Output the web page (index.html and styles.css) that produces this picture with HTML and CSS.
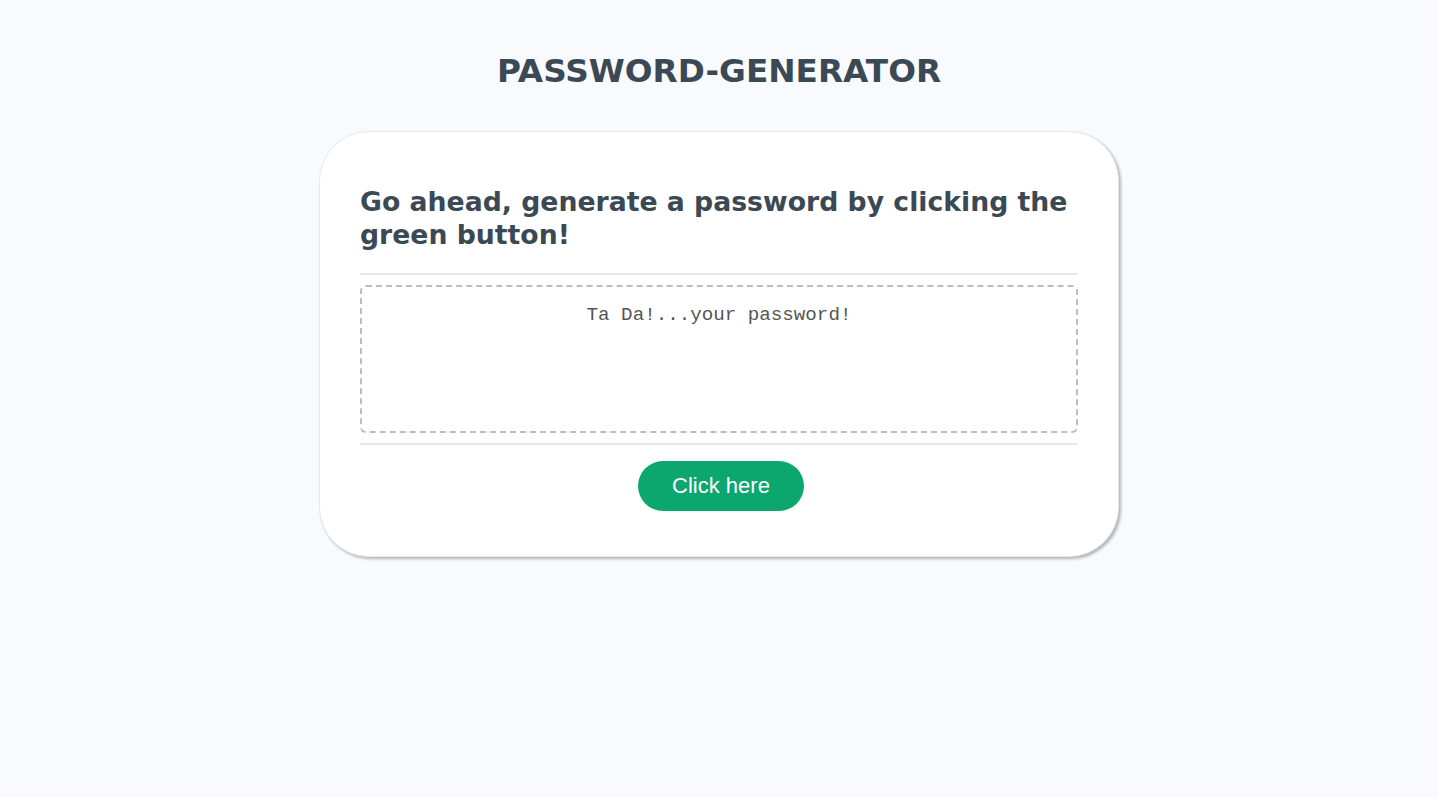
FILE: index.html
```html
<!DOCTYPE html>
<html lang="en">
<head>
<meta charset="UTF-8">
<title>Password Generator</title>
<link rel="stylesheet" href="styles.css">
</head>
<body>
<div class="wrapper">
  <header class="page-header">
    <h1 class="page-title">PASSWORD-GENERATOR</h1>
  </header>
  <div class="card">
    <div class="card-header">
      <h2 class="card-title">Go ahead, generate a password by clicking the green button!</h2>
    </div>
    <div class="card-body">
      <textarea readonly class="password" placeholder="Ta Da!...your password!" aria-label="Generated Password"></textarea>
    </div>
    <div class="card-footer">
      <button class="btn">Click here</button>
    </div>
  </div>
</div>
</body>
</html>
```

FILE: styles.css
```css
* { box-sizing: border-box; }

html, body { height: 100%; }

body {
  margin: 0;
  padding: 8px;
  font-family: "DejaVu Sans", Verdana, sans-serif;
  background-color: #f8fafd;
}

.wrapper {
  padding: 30px 20px 0;
}

.page-header {
  text-align: center;
  color: hsl(206, 17%, 28%);
}

.page-title {
  margin: 13px 0 40px;
  font-size: 32.7px;
  line-height: 40px;
  font-weight: bold;
}

.card {
  background-color: #fff;
  border-radius: 50px;
  border: 1px solid #e6e8ea;
  box-shadow: 2px 2px 3px rgba(0, 0, 0, 0.28);
  color: hsl(206, 17%, 28%);
  font-size: 18px;
  margin: 0 auto;
  max-width: 800px;
  padding: 29px 40px 29px;
}

.card-title {
  margin: 24px 0 22px;
  font-size: 26.7px;
  line-height: 33px;
  font-weight: bold;
}

.card-header::after,
.card-footer::before {
  content: "";
  display: block;
  width: 100%;
  height: 2px;
  background: #e5e7ea;
}

.card-body {
  min-height: 100px;
}

.password {
  display: block;
  width: 100%;
  height: 148px;
  margin: 10px 0 10px;
  padding: 17px 15px 15px;
  border: 2px dashed #b8bec8;
  border-radius: 6px;
  font-family: "Liberation Mono", "Courier New", monospace;
  font-size: 19.2px;
  line-height: 22px;
  text-align: center;
  color: #555;
  background: #fff;
  resize: none;
  overflow: hidden;
}

.password::placeholder {
  color: #555;
  opacity: 1;
}

.card-footer {
  text-align: center;
}

.btn {
  border: none;
  background-color: #0ca66f;
  border-radius: 25px;
  color: #fff;
  display: inline-block;
  font-family: "Liberation Sans", Arial, sans-serif;
  font-size: 22px;
  line-height: 22px;
  margin: 16px 16px 16px 20px;
  padding: 14px 34px;
  text-align: center;
  cursor: pointer;
}
```
